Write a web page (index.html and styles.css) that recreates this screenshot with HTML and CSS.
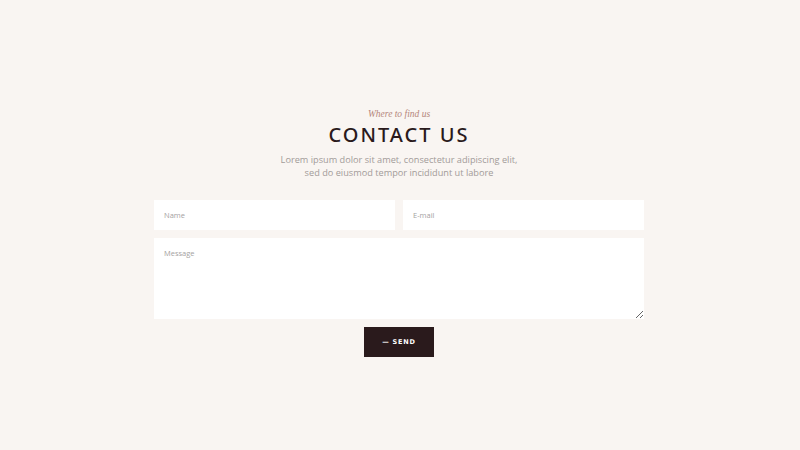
FILE: index.html
```html
<!DOCTYPE html>
<html lang="en">
<head>
    <meta charset="UTF-8">
    <meta name="viewport" content="width=device-width, initial-scale=1.0">
    <title>Contact us</title>
    <link rel="stylesheet" href="styles.css">
</head>
<body>
    <section class="contact">
        <p class="subtitle">Where to find us</p>
        <h2 class="title">CONTACT US</h2>
        <p class="intro">Lorem ipsum dolor sit amet, consectetur adipiscing elit,<br>sed do eiusmod tempor incididunt ut labore</p>

        <form class="contact-form">
            <div class="row">
                <input type="text" placeholder="Name">
                <input type="email" placeholder="E-mail">
            </div>
            <textarea placeholder="Message"></textarea>
            <button type="submit">&mdash; SEND</button>
        </form>
    </section>
</body>
</html>
```

FILE: styles.css
```css
/* Page */
body {
    margin: 0;
    background: #f9f5f2;
    font-family: "Open Sans", "Noto Sans", sans-serif;
    color: #2a1a1c;
}

/* Section */
.contact {
    width: 490px;
    margin: 0 auto;
    padding-top: 107px;
    text-align: center;
    transform: translateX(-1px);
}
.subtitle {
    margin: 0;
    font-family: "Liberation Serif", serif;
    font-style: italic;
    font-size: 9.5px;
    line-height: 14px;
    color: #b5857b;
}
.title {
    margin: 2px 0 0;
    font-family: "Noto Sans", sans-serif;
    font-weight: 500;
    font-size: 20px;
    letter-spacing: 2px;
    line-height: 24px;
}
.intro {
    margin: 6px 0 0;
    font-size: 9.2px;
    line-height: 13px;
    color: #a29b99;
}

/* Form */
.contact-form {
    margin-top: 21px;
    display: flex;
    flex-direction: column;
    align-items: center;
    gap: 8px;
}
.row {
    display: flex;
    gap: 8px;
    width: 100%;
}
input, textarea {
    box-sizing: border-box;
    border: none;
    background: #fff;
    font-family: "Open Sans", sans-serif;
    font-size: 7.5px;
    color: #444;
    padding: 0 10px;
    outline: none;
}
input {
    flex: 1;
    height: 30px;
}
textarea {
    width: 100%;
    height: 81px;
    padding-top: 10px;
    resize: vertical;
}
::placeholder {
    color: #a5a2a2;
}
button {
    width: 70px;
    height: 30px;
    border: none;
    background: #2a1a1c;
    color: #fff;
    font-family: "DejaVu Sans", sans-serif;
    font-weight: bold;
    font-size: 6.5px;
    letter-spacing: 0.8px;
    cursor: pointer;
}
```
